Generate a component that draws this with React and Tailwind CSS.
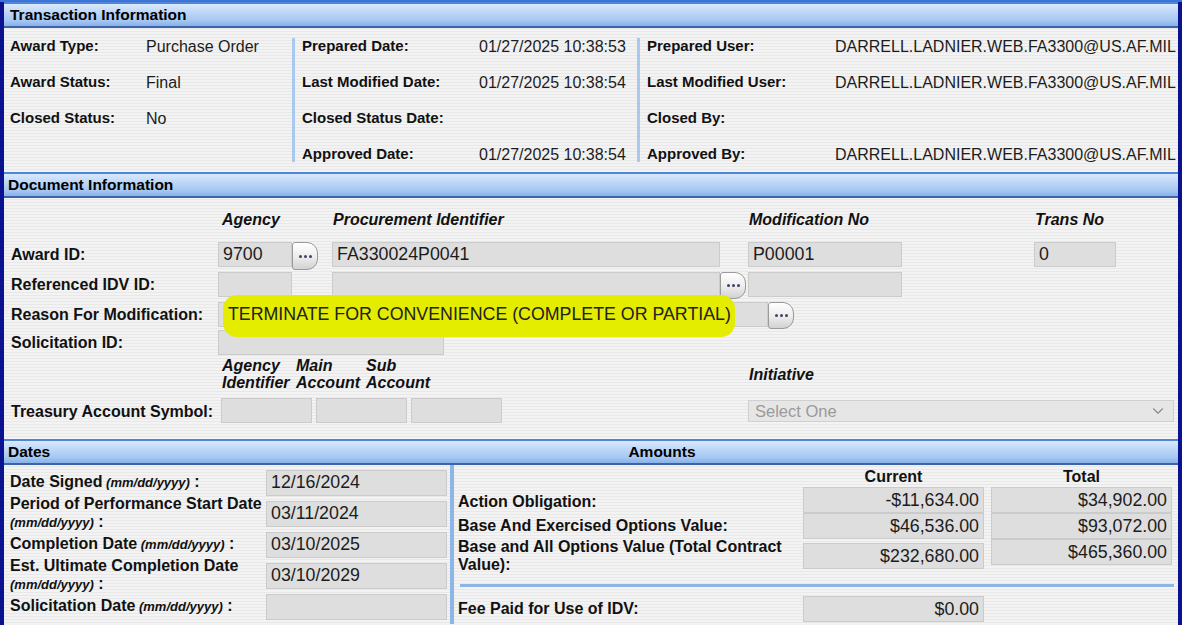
// App.jsx - award transaction detail form (FPDS-style)
import { ChevronDown } from 'lucide-react';

const HEADER =
  'flex items-center h-[26px] border-t-2 border-t-[#4f86d8] border-b-2 border-b-[#3d64ab] bg-[linear-gradient(to_bottom,#d9e9fd_0%,#bcd6f7_40%,#a5c7f2_75%,#88b2ea_100%)] text-[15.5px] font-bold text-black';

const STRIPES =
  'bg-[repeating-linear-gradient(to_bottom,#f3f3f3_0px,#f3f3f3_2px,#e8e8e8_2px,#e8e8e8_3px)]';

function Box({ className = '', children }) {
  return (
    <div
      className={
        'h-[25px] bg-[#dedede] border border-[#cbcbcb] flex items-center px-[4px] text-[17.8px] text-[#1c1c1c] whitespace-nowrap ' +
        className
      }
    >
      {children}
    </div>
  );
}

function Dots({ className = '' }) {
  return (
    <div
      className={
        'w-[26px] h-[27px] shrink-0 rounded-l-[3px] rounded-r-[11px] border border-[#9a9a9a] bg-[linear-gradient(to_bottom,#ffffff_0%,#ececec_55%,#d2d2d2_100%)] flex items-center justify-center gap-[2px] ' +
        className
      }
    >
      <span className="w-[3px] h-[3px] rounded-full bg-[#3a4560]" />
      <span className="w-[3px] h-[3px] rounded-full bg-[#3a4560]" />
      <span className="w-[3px] h-[3px] rounded-full bg-[#3a4560]" />
    </div>
  );
}

function Fmt() {
  return <span className="text-[13px] italic font-bold"> (mm/dd/yyyy)</span>;
}

const trans = [
  ['Award Type:', 'Purchase Order', 'Prepared Date:', '01/27/2025 10:38:53', 'Prepared User:', 'DARRELL.LADNIER.WEB.FA3300@US.AF.MIL'],
  ['Award Status:', 'Final', 'Last Modified Date:', '01/27/2025 10:38:54', 'Last Modified User:', 'DARRELL.LADNIER.WEB.FA3300@US.AF.MIL'],
  ['Closed Status:', 'No', 'Closed Status Date:', '', 'Closed By:', ''],
  ['', '', 'Approved Date:', '01/27/2025 10:38:54', 'Approved By:', 'DARRELL.LADNIER.WEB.FA3300@US.AF.MIL'],
];

export default function App() {
  return (
    <div className="w-[1182px] h-[625px] overflow-hidden bg-[#3b73d8] pt-[2px] font-[family-name:Liberation_Sans,Arial,sans-serif] text-[#111]">
      <div className={'h-[623px] border-l-4 border-r-4 border-[#0a1290] ' + STRIPES}>
        {/* Transaction Information */}
        <div className={HEADER + ' pl-[6px]'}>Transaction Information</div>
        <div className="flex h-[144px]">
          <div className="w-[288px] pl-[6px] flex flex-col">
            {trans.map((r, i) => (
              <div key={i} className="h-[36px] flex items-center pt-[1px]">
                <span className="w-[136px] text-[15px] font-bold">{r[0]}</span>
                <span className="text-[16px] text-[#1c1c1c]">{r[1]}</span>
              </div>
            ))}
          </div>
          <div className="w-[3px] my-[10px] bg-[#a9c9ee]" />
          <div className="w-[342px] pl-[7px] flex flex-col">
            {trans.map((r, i) => (
              <div key={i} className="h-[36px] flex items-center pt-[1px]">
                <span className="w-[177px] text-[15px] font-bold">{r[2]}</span>
                <span className="text-[16px] text-[#1c1c1c]">{r[3]}</span>
              </div>
            ))}
          </div>
          <div className="w-[3px] my-[10px] bg-[#a9c9ee]" />
          <div className="flex-1 pl-[7px] flex flex-col">
            {trans.map((r, i) => (
              <div key={i} className="h-[36px] flex items-center pt-[1px] whitespace-nowrap">
                <span className="w-[188px] text-[15px] font-bold">{r[4]}</span>
                <span className="text-[16px] text-[#1c1c1c]">{r[5]}</span>
              </div>
            ))}
          </div>
        </div>

        {/* Document Information */}
        <div className={HEADER + ' pl-[4px]'}>Document Information</div>
        <div className="h-[241px] text-[16px]">
          <div className="h-[44px] flex items-center font-bold italic">
            <div className="w-[214px]" />
            <div className="w-[114px] pl-[4px]">Agency</div>
            <div className="w-[416px] pl-[1px]">Procurement Identifier</div>
            <div className="w-[286px] pl-[1px]">Modification No</div>
            <div className="pl-[1px]">Trans No</div>
          </div>
          <div className="h-[30px] flex items-start">
            <div className="w-[214px] pl-[7px] font-bold leading-[25px]">Award ID:</div>
            <div className="w-[114px] flex">
              <Box className="w-[74px]">9700</Box>
              <Dots className="h-[28px]" />
            </div>
            <div className="w-[416px]">
              <Box className="w-[388px]">FA330024P0041</Box>
            </div>
            <div className="w-[286px]">
              <Box className="w-[154px]">P00001</Box>
            </div>
            <Box className="w-[82px]">0</Box>
          </div>
          <div className="h-[30px] flex items-start">
            <div className="w-[214px] pl-[7px] font-bold leading-[25px]">Referenced IDV ID:</div>
            <div className="w-[114px]">
              <Box className="w-[74px]" />
            </div>
            <div className="w-[416px] flex">
              <Box className="w-[388px]" />
              <Dots />
            </div>
            <Box className="w-[154px]" />
          </div>
          <div className="h-[28px] flex items-start">
            <div className="w-[214px] pl-[7px] font-bold leading-[25px]">Reason For Modification:</div>
            <Box className="w-[550px] px-0">
              <span className="relative pl-[5px] pr-[4px]">
                <span className="absolute left-0 right-0 -top-[6px] -bottom-[9px] rounded-[14px] bg-[#e4ec00]" />
                <span className="relative text-[#222]">TERMINATE FOR CONVENIENCE (COMPLETE OR PARTIAL)</span>
              </span>
            </Box>
            <Dots />
          </div>
          <div className="h-[27px] flex items-start">
            <div className="w-[214px] pl-[7px] font-bold leading-[25px]">Solicitation ID:</div>
            <Box className="w-[226px]" />
          </div>
          <div className="h-[41px] flex items-center font-bold italic leading-[17px]">
            <div className="w-[218px]" />
            <div className="w-[74px] self-start">Agency<br />Identifier</div>
            <div className="w-[70px] self-start">Main<br />Account</div>
            <div className="w-[383px] self-start">Sub<br />Account</div>
            <div className="-mt-[6px]">Initiative</div>
          </div>
          <div className="flex items-start">
            <div className="w-[217px] pl-[7px] font-bold leading-[27px]">Treasury Account Symbol:</div>
            <div className="flex gap-[4px]">
              <Box className="w-[91px]" />
              <Box className="w-[91px]" />
              <Box className="w-[91px]" />
            </div>
            <div className="w-[246px]" />
            <div className="w-[426px] h-[22px] mt-[2px] bg-[#e6e6e6] border border-[#d0d0d0] flex items-center justify-between pl-[6px] pr-[6px] text-[16.5px] text-[#9a9a9a]">
              <span>Select One</span>
              <ChevronDown size={18} strokeWidth={1.5} className="text-[#8a8a8a]" />
            </div>
          </div>
        </div>

        {/* Dates / Amounts */}
        <div className={HEADER}>
          <div className="w-[446px] pl-[4px]">Dates</div>
          <div className="w-[424px] text-center">Amounts</div>
        </div>
        <div className="flex h-[159px] font-bold text-[16px]">
          <div className="w-[446px] pt-[2px] flex flex-col">
            {[
              [<>Date Signed<Fmt /> :</>, '12/16/2024'],
              [<>Period of Performance Start Date<br /><span className="text-[13px] italic">(mm/dd/yyyy)</span> :</>, '03/11/2024'],
              [<>Completion Date<Fmt /> :</>, '03/10/2025'],
              [<>Est. Ultimate Completion Date<br /><span className="text-[13px] italic">(mm/dd/yyyy)</span> :</>, '03/10/2029'],
              [<>Solicitation Date<Fmt /> :</>, ''],
            ].map((r, i) => (
              <div key={i} className="h-[31px] flex items-center">
                <div className="w-[262px] pl-[6px] leading-[18px]">{r[0]}</div>
                <Box className="w-[181px] h-[26px] font-normal">{r[1]}</Box>
              </div>
            ))}
          </div>
          <div className="w-[4px] bg-[#8db6e8]" />
          <div className="flex-1 pl-[4px] pt-[1px] flex flex-col">
            <div className="h-[21px] flex items-center">
              <div className="w-[345px]" />
              <div className="w-[181px] text-center">Current</div>
              <div className="w-[181px] ml-[7px] text-center">Total</div>
            </div>
            <div className="h-[26px] flex items-center">
              <div className="w-[345px] mt-[3px]">Action Obligation:</div>
              <Box className="w-[181px] h-[26px] justify-end font-normal">-$11,634.00</Box>
              <Box className="w-[181px] h-[26px] ml-[7px] justify-end font-normal">$34,902.00</Box>
            </div>
            <div className="h-[26px] flex items-center">
              <div className="w-[345px]">Base And Exercised Options Value:</div>
              <Box className="w-[181px] h-[26px] justify-end font-normal">$46,536.00</Box>
              <Box className="w-[181px] h-[26px] ml-[7px] justify-end font-normal">$93,072.00</Box>
            </div>
            <div className="h-[36px] flex items-start">
              <div className="w-[345px] leading-[18px] -mt-[1px]">Base and All Options Value (Total Contract Value):</div>
              <Box className="w-[181px] h-[26px] mt-[4px] justify-end font-normal">$232,680.00</Box>
              <Box className="w-[181px] h-[26px] ml-[7px] justify-end font-normal">$465,360.00</Box>
            </div>
            <div className="h-[3px] mt-[9px] ml-[2px] mr-[4px] bg-[#8db6e8]" />
            <div className="h-[26px] mt-[9px] flex items-center">
              <div className="w-[345px]">Fee Paid for Use of IDV:</div>
              <Box className="w-[181px] h-[26px] justify-end font-normal">$0.00</Box>
            </div>
          </div>
        </div>
      </div>
    </div>
  );
}
